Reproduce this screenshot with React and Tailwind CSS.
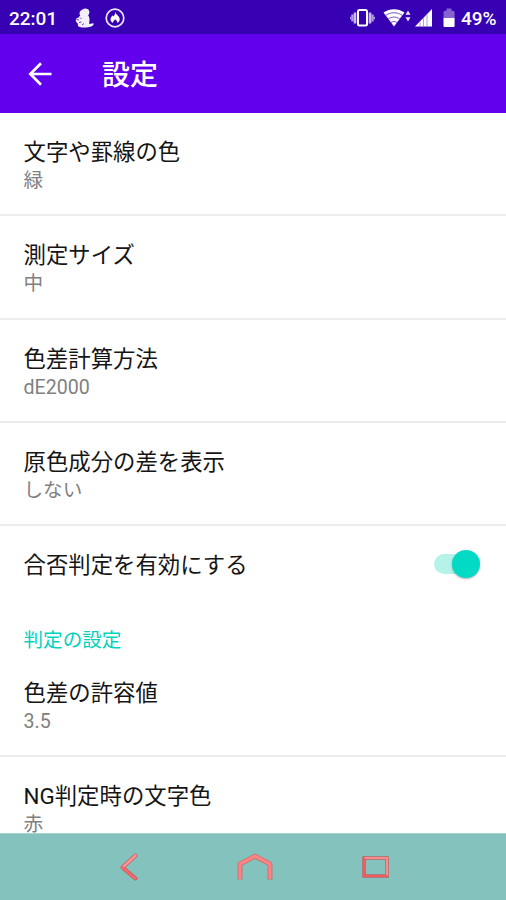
import React from 'react';

const generalItems = [
  { title: '文字や罫線の色', summary: '緑' },
  { title: '測定サイズ', summary: '中' },
  { title: '色差計算方法', summary: 'dE2000' },
  { title: '原色成分の差を表示', summary: 'しない' },
];

function StatusBar() {
  return (
    <div className="h-[34px] shrink-0 bg-[#3700b3] text-white">
      <div className="flex h-[36px] items-center pl-[9px] pr-[8px]">
        <span className="w-[49px] text-[19px] font-medium leading-none">22:01</span>
        <svg className="ml-[17px]" width="20" height="21" viewBox="0 0 20 21" fill="#fff" fillOpacity="0.94">
          <path d="M7.500 1.500C9.500 0 13 .4 14 2.600c.9 1.900.2 3.400-.8 4.600 1 1.600 1.500 3.200 1.300 5-.1 1.400-.5 2.400-.2 3.500 1.200.9 2.800-.6 4.200-.3.6 1-.5 2.300-2.400 3-3.200 1.300-8.200 1.500-11.300.6-2-.6-2.600-2-1.600-3C2.600 15.600 1 14.400.8 12.600.6 10.800 1.800 10 3.200 9.800c.8-1 1.600-1.600 2-2.400C4 6 4.400 2.600 7.500 1.500z" />
          <path d="M1.500 11.500l2.500.5M4 14.500l2.500-.5M5 9.500l1.500 1.500M7 17l2-1.500" stroke="#3700b3" strokeOpacity="0.75" strokeWidth="1" fill="none" />
        </svg>
        <svg className="ml-[10px]" width="20" height="20" viewBox="0 0 20 20" fill="none">
          <circle cx="10" cy="10" r="8.800" stroke="#ece6fa" strokeWidth="1.700" />
          <path d="M10.300 3.800c0 2 2.200 3 3.600 5 1.500 2.400.9 5-1.400 6.200-.2-1.600-.9-2.400-2.300-3.700-1.300 1.200-2.200 2.200-2.300 3.700-2.100-1.100-3-3.300-2-5.200.5-1 1.200-1.500 1.500-2.500l.9 1.200c1.200-1.300 2.100-2.600 2-4.700z" fill="#fff" />
        </svg>
        <svg className="ml-auto" width="25" height="20" viewBox="0 0 25 20" fill="none">
          <rect x="8" y="2" width="9" height="15.500" rx="1.500" stroke="#fff" strokeWidth="2" />
          <path d="M5 4.500v11M20 4.500v11" stroke="#c8b9ee" strokeWidth="2.600" />
          <path d="M2.500 6.500v7M22.500 6.500v7" stroke="#b09be6" strokeWidth="2.400" />
          <path d="M.7 8.800v2.500M24.300 8.800v2.500" stroke="#b09be6" strokeWidth="1.400" />
        </svg>
        <svg className="ml-[8px]" width="28" height="20" viewBox="0 0 28 20" fill="#fff">
          <path d="M.5 4.500C6.500 0 15.500 0 21.500 4.500L11 18.500z" />
          <path d="M2.500 7.600C7.500 3.800 14.500 3.800 19.500 7.600M5.200 11c3.600-2.600 8-2.600 11.600 0M8 14.500c2-1.300 4-1.300 6 0" stroke="#6840c7" strokeWidth="0.900" fill="none" />
          <path d="M25 2.500l2.500 4.200h-5zM25 13.500l2.500-4.200h-5z" fillOpacity="0.9" />
        </svg>
        <svg className="ml-[4px]" width="18" height="18" viewBox="0 0 18 18">
          <path d="M0 17.500L17 0v17.500z" fill="#fff" />
          <path d="M5 12.400v5M8.500 8.800v8.500M12 5.200v12" stroke="#9a80dc" strokeWidth="0.800" />
        </svg>
        <svg className="ml-[10px]" width="12" height="20" viewBox="0 0 12 20">
          <path d="M3.500.5h5v2.300h1.500a1.600 1.600 0 011.600 1.600V10H.5V4.400A1.600 1.600 0 012.100 2.800h1.400z" fill="#8763d2" />
          <path d="M.5 10h11.100v8a1 1 0 01-1 1H1.500a1 1 0 01-1-1z" fill="#fff" />
        </svg>
        <span className="ml-[6px] w-[37px] text-[19px] font-medium leading-none">49%</span>
      </div>
    </div>
  );
}

function AppBar() {
  return (
    <header className="flex h-[79px] shrink-0 items-center bg-[#6200ee] pl-[28px] text-white">
      <button aria-label="戻る">
        <svg width="24" height="24" viewBox="0 0 24 24" fill="none" stroke="#fff" strokeWidth="2.700">
          <path d="M23.500 12H3M13 1.300L2.300 12 13 22.700" />
        </svg>
      </button>
      <h1 className="ml-[50px] pt-[5px] text-[28px] font-medium leading-[40px]">設定</h1>
    </header>
  );
}

function SettingItem({ title, summary }) {
  return (
    <div className="h-[103.3px] shrink-0 border-b-2 border-[#ececec] pl-[23.500px] pt-[24px]">
      <p className="text-[22.4px] leading-[30px] text-[#151515]">{title}</p>
      <p className="text-[19.6px] leading-[27px] text-[#808080]">{summary}</p>
    </div>
  );
}

function Switch() {
  return (
    <div className="relative h-[28px] w-[46px]">
      <div className="absolute left-0 top-[4px] h-[20px] w-[40px] rounded-full bg-[#b5f2e9]" />
      <div className="absolute right-[0.500px] top-0 size-[28px] rounded-full bg-[#03dac5] shadow-[0_1px_2px_rgba(0,0,0,0.3)]" />
    </div>
  );
}

function NavBar() {
  return (
    <nav className="flex h-[67px] shrink-0 items-center border-t border-[#a5d3cd] bg-[#84c3bd] pl-[119px]">
      <svg width="20" height="28" viewBox="0 0 20 28" fill="none" strokeLinecap="round" strokeLinejoin="round">
        <path d="M16.500 2.500L3.500 14.500 16.500 25.500" stroke="#b85f62" strokeWidth="4" />
        <path d="M16.500 2.500L3.500 14.500" stroke="#ff9292" strokeWidth="2.600" />
        <path d="M3.500 14.500L16.500 25.500" stroke="#fb6468" strokeWidth="2.600" />
      </svg>
      <svg className="ml-[97px]" width="38" height="28" viewBox="0 0 38 28" fill="none" strokeLinejoin="round">
        <path d="M4 26.500V11L19 3l15 8v15.500" stroke="#c06a6b" strokeWidth="4.800" />
        <path d="M4 26V11L19 3l15 8v15" stroke="#ff8383" strokeWidth="3.200" />
      </svg>
      <svg className="ml-[87px]" width="29" height="24" viewBox="0 0 29 24" fill="none">
        <rect x="3" y="3" width="23" height="18" stroke="#b85f62" strokeWidth="3.400" />
        <path d="M3 3h23v18" stroke="#ff8a8a" strokeWidth="2.200" />
        <path d="M26 21H3V3" stroke="#f55a5e" strokeWidth="2.200" />
      </svg>
    </nav>
  );
}

function App() {
  return (
    <div className="flex h-[900px] w-[506px] flex-col overflow-hidden bg-white font-['Roboto','Noto_Sans_CJK_JP',sans-serif]" lang="ja">
      <StatusBar />
      <AppBar />
      <main className="flex min-h-0 flex-1 flex-col overflow-hidden">
        {generalItems.map((item) => (
          <SettingItem key={item.title} {...item} />
        ))}
        <div className="flex h-[76px] shrink-0 items-center justify-between pl-[23.500px] pr-[26px]">
          <p className="pt-[2px] text-[22.4px] leading-[30px] text-[#151515]">合否判定を有効にする</p>
          <Switch />
        </div>
        {/* Category heading */}
        <h2 className="h-[52px] shrink-0 pl-[23.500px] pt-[25px] text-[19.6px] leading-[27px] text-[#03d2be]">判定の設定</h2>
        <SettingItem title="色差の許容値" summary="3.5" />
        <SettingItem title="NG判定時の文字色" summary="赤" />
      </main>
      <NavBar />
    </div>
  );
}

export default App;
